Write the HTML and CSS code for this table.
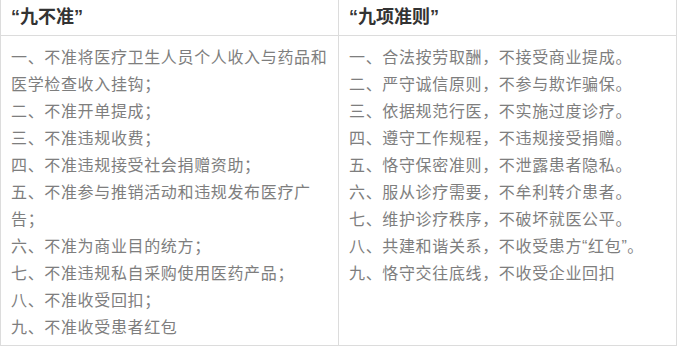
FILE: index.html
```html
<!DOCTYPE html>
<html lang="zh-CN">
<head>
<meta charset="utf-8">
<link rel="stylesheet" href="styles.css">
</head>
<body>
<table class="rules">
  <thead>
    <tr>
      <th class="col-left">“九不准”</th>
      <th class="col-right">“九项准则”</th>
    </tr>
  </thead>
  <tbody>
    <tr>
      <td class="col-left">
        <p>一、不准将医疗卫生人员个人收入与药品和医学检查收入挂钩；</p>
        <p>二、不准开单提成；</p>
        <p>三、不准违规收费；</p>
        <p>四、不准违规接受社会捐赠资助；</p>
        <p>五、不准参与推销活动和违规发布医疗广告；</p>
        <p>六、不准为商业目的统方；</p>
        <p>七、不准违规私自采购使用医药产品；</p>
        <p>八、不准收受回扣；</p>
        <p>九、不准收受患者红包</p>
      </td>
      <td class="col-right">
        <p>一、合法按劳取酬，不接受商业提成。</p>
        <p>二、严守诚信原则，不参与欺诈骗保。</p>
        <p>三、依据规范行医，不实施过度诊疗。</p>
        <p>四、遵守工作规程，不违规接受捐赠。</p>
        <p>五、恪守保密准则，不泄露患者隐私。</p>
        <p>六、服从诊疗需要，不牟利转介患者。</p>
        <p>七、维护诊疗秩序，不破坏就医公平。</p>
        <p>八、共建和谐关系，不收受患方“红包”。</p>
        <p>九、恪守交往底线，不收受企业回扣</p>
      </td>
    </tr>
  </tbody>
</table>
</body>
</html>
```
FILE: styles.css
```css
html, body {
  margin: 0;
  padding: 0;
  background: #ffffff;
}
body {
  font-family: "Liberation Sans", "Noto Sans CJK SC", sans-serif;
}
.rules {
  border-collapse: collapse;
  width: 677px;
  table-layout: fixed;
}
.rules .col-left {
  width: 338px;
}
.rules th,
.rules td {
  border: 1px solid #dcdcdc;
  text-align: left;
  vertical-align: top;
}
.rules th {
  border-top: none;
  height: 35px;
  padding: 0 10px;
  box-sizing: border-box;
  vertical-align: middle;
  font-size: 18px;
  font-weight: bold;
  color: #333333;
  line-height: 24px;
}
.rules td {
  padding: 8px 10px 4px 10px;
  font-size: 16px;
  letter-spacing: 0.65px;
  line-height: 27px;
  color: #7e7e7e;
}
.rules td p {
  margin: 0;
}
```
